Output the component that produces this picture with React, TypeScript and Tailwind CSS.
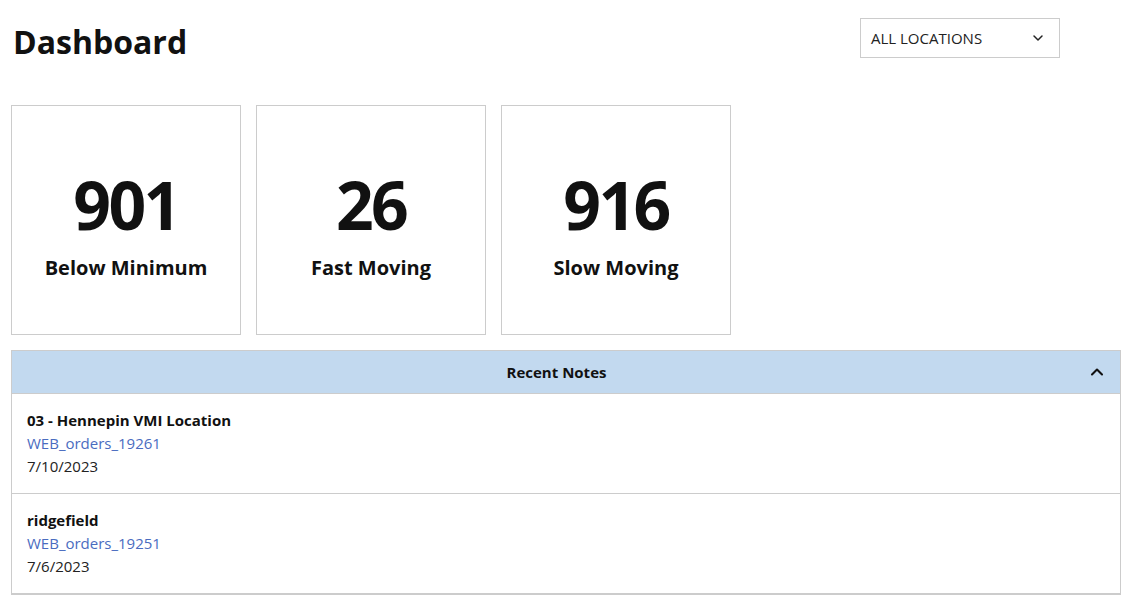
import { ChevronDown, ChevronUp } from 'lucide-react'

const stats = [
    { value: '901', label: 'Below Minimum' },
    { value: '26', label: 'Fast Moving' },
    { value: '916', label: 'Slow Moving' },
]

const notes = [
    { location: '03 - Hennepin VMI Location', order: 'WEB_orders_19261', date: '7/10/2023' },
    { location: 'ridgefield', order: 'WEB_orders_19251', date: '7/6/2023' },
]

const App = () => {
    return (
        <div className="min-h-screen bg-white text-[#111] font-['Open_Sans',sans-serif] pl-[11px] pr-[8px]">
            {/* Header */}
            <div className="flex items-start h-[105px]">
                <div className="w-[849px]">
                    <h1 className="text-[32px] font-bold leading-none pl-[2px] pt-[26px]">Dashboard</h1>
                </div>
                <button className="mt-[18px] w-[200px] h-[40px] border border-[#cccccc] flex items-center justify-between pl-[10px] pr-[13px] text-[15px] text-[#222]">
                    ALL LOCATIONS
                    <ChevronDown className="w-4 h-4" strokeWidth={2.25} />
                </button>
            </div>

            {/* Stat cards */}
            <div className="flex gap-[15px]">
                {stats.map((s) => (
                    <div key={s.label} className="w-[230px] h-[230px] border border-[#cccccc] flex flex-col items-center pt-[58px]">
                        <div className="text-[66px] font-bold leading-[80px] tracking-[-0.04em]">{s.value}</div>
                        <div className="text-[20px] font-bold leading-[28px] mt-[10px]">{s.label}</div>
                    </div>
                ))}
            </div>

            {/* Recent notes */}
            <div className="mt-[15px] border border-[#cccccc]">
                <div className="h-[43px] bg-[#c2d9ef] border-b border-[#cccccc] flex items-center pl-[14px] pr-[13px]">
                    <span className="flex-1 text-center text-[15px] font-bold">Recent Notes</span>
                    <ChevronUp className="w-5 h-5" strokeWidth={2.5} />
                </div>
                {notes.map((n) => (
                    <div key={n.order} className="h-[100px] border-b border-[#cccccc] px-[15px] pt-[15px] text-[15px] leading-[23px]">
                        <div className="font-bold">{n.location}</div>
                        <div className="text-[#4a6cc0]">{n.order}</div>
                        <div className="text-[#222]">{n.date}</div>
                    </div>
                ))}
            </div>
        </div>
    )
}

export default App
